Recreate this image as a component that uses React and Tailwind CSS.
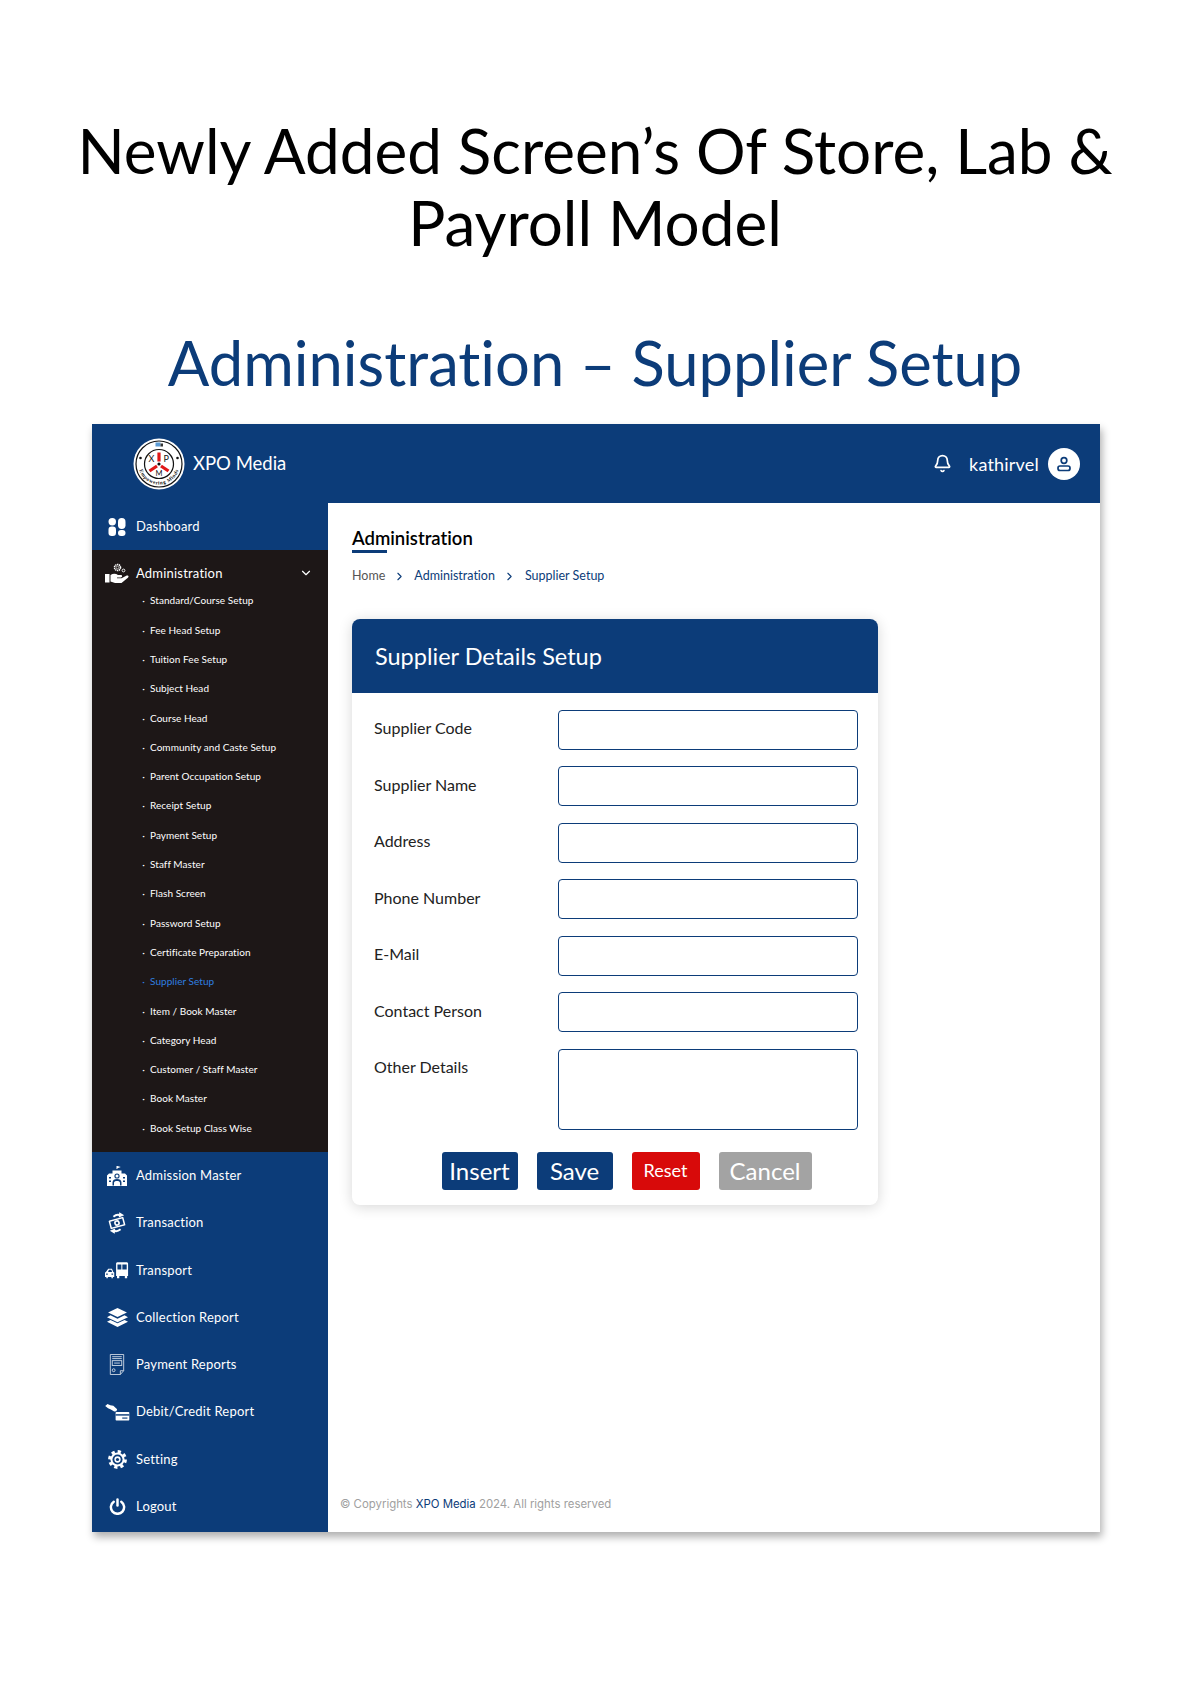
import React from 'react'
import { ChevronDown, ChevronRight, Bell } from 'lucide-react'

const subItems = [
  'Standard/Course Setup', 'Fee Head Setup', 'Tuition Fee Setup', 'Subject Head', 'Course Head',
  'Community and Caste Setup', 'Parent Occupation Setup', 'Receipt Setup', 'Payment Setup', 'Staff Master',
  'Flash Screen', 'Password Setup', 'Certificate Preparation', 'Supplier Setup', 'Item / Book Master',
  'Category Head', 'Customer / Staff Master', 'Book Master', 'Book Setup Class Wise',
]

const BLUE = '#0c3c79'

const Logo = () => (
  <svg viewBox="0 0 52 52" className="w-[52px] h-[52px]">
    <circle cx="26" cy="26" r="25.5" fill="#fff" />
    <circle cx="26" cy="26" r="23" fill="none" stroke="#111" strokeWidth="1.2" />
    <circle cx="26" cy="26" r="14.5" fill="none" stroke="#111" strokeWidth="1.2" />
    <path d="M26 14.500v9M16.500 33l7.500-5M35.500 33l-7.500-5" stroke="#e01818" strokeWidth="3.2" />
    <circle cx="26" cy="26" r="1.600" fill="#111" />
    <text x="15.500" y="23.500" fontSize="9" fill="#111">X</text>
    <text x="30.500" y="23.500" fontSize="9" fill="#111">P</text>
    <text x="22.500" y="37.500" fontSize="7.500" fill="#111">M</text>
    <rect x="22.500" y="4.500" width="5" height="4" fill="#5b9bd5" />
    <rect x="27.500" y="5.500" width="2.500" height="3" fill="#333" />
    <circle cx="7.500" cy="20" r="1.300" fill="#111" />
    <circle cx="44.500" cy="20" r="1.300" fill="#111" />
    <defs>
      <path id="logoRing" d="M5.500 26a20.500 20.500 0 0 0 41 0" />
    </defs>
    <text fontSize="5.200" fill="#111" fontFamily="Liberation Serif, serif" fontWeight="700" letterSpacing=".5">
      <textPath href="#logoRing" startOffset="50%" textAnchor="middle">Empowering Minds</textPath>
    </text>
  </svg>
)

const DashIcon = () => (
  <svg viewBox="0 0 18 18" className="w-[18px] h-[18px]" fill="#fff">
    <rect x="0.500" y="0" width="7.500" height="7.500" rx="3.700" />
    <rect x="10" y="0" width="7.500" height="11" rx="3.700" />
    <rect x="0.500" y="8.500" width="7.500" height="9.500" rx="3.200" />
    <rect x="10" y="12" width="7.500" height="6" rx="3" />
  </svg>
)

const HandIcon = () => (
  <svg viewBox="0 0 24 21" className="w-6 h-[21px]">
    <circle cx="12.500" cy="4.500" r="3" fill="none" stroke="#fff" strokeWidth="1.600" strokeDasharray="1.300 .6" />
    <circle cx="12.500" cy="4.500" r="1.300" fill="none" stroke="#fff" strokeWidth=".6" />
    <circle cx="18.500" cy="7.500" r="1.400" fill="none" stroke="#fff" strokeWidth=".9" />
    <rect x="0" y="11" width="4.500" height="8.500" fill="#fff" />
    <path d="M5.500 12c3-1.800 5.500-1.200 7.500 0h2.800c1.700 0 1.700 2.400 0 2.400H12v.8h4.500l5.200-2.600c1.500-.7 2.600 1 1.200 2.100L16.500 20H10l-4.500-1.500z" fill="#fff" />
  </svg>
)

const AdmissionIcon = () => (
  <svg viewBox="0 0 20 20" className="w-5 h-5" fill="#fff">
    <path d="M9.500 0h.9v3h-.9zM10.400 0l3.400 1-3.400 1.200z" />
    <path d="M5.500 7.500V4.500h9v3H18l2 2V20H0V9.500l2-2z" />
    <circle cx="10" cy="10" r="2.600" fill={BLUE} />
    <circle cx="10" cy="10" r="1.500" fill="#fff" />
    <path d="M5.500 19.500v-3c0-2.500 2-3.500 4.500-3.500s4.500 1 4.500 3.500v3h-1.500v-2.500c0-1.500-1.300-2-3-2s-3 .5-3 2v2.500z" fill={BLUE} />
    <path d="M2 11h2v1.600H2zM2 14.500h2v1.600H2zM16 11h2v1.600h-2zM16 14.500h2v1.600h-2z" fill={BLUE} />
  </svg>
)

const TransactionIcon = () => (
  <svg viewBox="0 0 20 24" className="w-[18px] h-[22px]">
    <path d="M6 5c2.500-2 6-2.500 8-1" fill="none" stroke="#fff" strokeWidth="2.200" />
    <path d="M12.500 0l5.500 3.500-6 2.500z" fill="#fff" />
    <g transform="rotate(-15 10 12)">
      <rect x="1.500" y="7" width="17" height="10" rx="1" fill="#fff" />
      <rect x="3.200" y="8.700" width="13.600" height="6.600" fill={BLUE} />
      <circle cx="10" cy="12" r="3.200" fill="#fff" />
      <circle cx="10" cy="12" r="1.400" fill={BLUE} />
    </g>
    <path d="M14 19c-2.500 2-6 2.500-8 1" fill="none" stroke="#fff" strokeWidth="2.200" />
    <path d="M7.500 24L2 20.500 8 18z" fill="#fff" />
  </svg>
)

const TransportIcon = () => (
  <svg viewBox="0 0 26 18" className="w-[24px] h-[17px]" fill="#fff">
    <path d="M3.500 7h4L9 10.500l1 .8V16H8.500v1.500H7V16H3v1.500H1.500V16H0v-4.700l1-.8z" />
    <path d="M4.200 8.200h2.600l.9 2.300H3.300z" fill={BLUE} />
    <rect x="1.200" y="12.300" width="1.800" height="1.300" fill={BLUE} />
    <rect x="7" y="12.300" width="1.800" height="1.300" fill={BLUE} />
    <path d="M12 1.500C12 .5 13 0 14 0h9c1 0 2 .5 2 1.500V15h-1v2.500h-2.500V15h-6v2.500H13V15h-1zM13.500 2.500V8h4.200V2.500zm5.300 0V8h4.700V2.500z" fillRule="evenodd" />
  </svg>
)

const LayersIcon = () => (
  <svg viewBox="0 0 20 18" className="w-[21px] h-[19px]" fill="#fff">
    <path d="M10 0l9 4.300-9 4.300-9-4.300z" />
    <path d="M3.300 6.900L10 10.100l6.700-3.200L20 8.700l-10 4.800L0 8.700z" />
    <path d="M3.300 11.300L10 14.500l6.700-3.200 3.300 1.800L10 18 0 13.100z" />
  </svg>
)

const ReportIcon = () => (
  <svg viewBox="0 0 16 22" className="w-[16px] h-[21px]" fill="none" stroke="#fff" strokeWidth=".9" opacity=".85">
    <path d="M1 .5h14v17l-3.500 4H1z" />
    <path d="M3 2.800h10M3 4.800h10" />
    <rect x="3" y="7" width="10" height="5" />
    <path d="M5 9.500h6" />
    <circle cx="4.500" cy="17" r="1.500" />
    <path d="M11.500 21.500v-4h3.500" />
  </svg>
)

const DebitIcon = () => (
  <svg viewBox="0 0 26 18" className="w-[25px] h-[17px]" fill="#fff">
    <path d="M0 2.200L2.400 0l3 1.200 3.200.6 4 3.700-.8 2.200-2.300.2-3.500-2.200-3-1.300z" />
    <rect x="11" y="8.500" width="14.500" height="9" rx=".8" />
    <rect x="11" y="10.800" width="14.500" height="1.500" fill={BLUE} />
    <rect x="18" y="14.300" width="5.500" height="1.200" fill={BLUE} />
  </svg>
)

const GearIcon = () => (
  <svg viewBox="0 0 20 20" className="w-[19px] h-[19px]">
    <circle cx="10" cy="10" r="8.300" fill="none" stroke="#fff" strokeWidth="3.200" strokeDasharray="3.400 3.110" />
    <circle cx="10" cy="10" r="7.400" fill="#fff" />
    <circle cx="10" cy="10" r="5.300" fill={BLUE} />
    <circle cx="10" cy="10" r="3.300" fill="#fff" />
    <circle cx="10" cy="10" r="1.700" fill={BLUE} />
  </svg>
)

const PowerIcon = () => (
  <svg viewBox="0 0 18 18" className="w-[17px] h-[17px]" fill="none" stroke="#fff" strokeWidth="2.600" strokeLinecap="round">
    <path d="M9 1.500v6.500" />
    <path d="M5 4a7 7 0 1 0 8 0" />
  </svg>
)

const navTop = [{ label: 'Dashboard', icon: <DashIcon /> }]
const navBottom = [
  { label: 'Admission Master', icon: <AdmissionIcon /> },
  { label: 'Transaction', icon: <TransactionIcon /> },
  { label: 'Transport', icon: <TransportIcon /> },
  { label: 'Collection Report', icon: <LayersIcon /> },
  { label: 'Payment Reports', icon: <ReportIcon /> },
  { label: 'Debit/Credit Report', icon: <DebitIcon /> },
  { label: 'Setting', icon: <GearIcon /> },
  { label: 'Logout', icon: <PowerIcon /> },
]

const NavRow = ({ label, icon }) => (
  <div className="h-[47.250px] flex items-center text-white text-[13px] tracking-[0.2px]">
    <div className="w-[44px] pl-[10px] pr-[4px] flex justify-center shrink-0">{icon}</div>
    <span>{label}</span>
  </div>
)

const fields = ['Supplier Code', 'Supplier Name', 'Address', 'Phone Number', 'E-Mail', 'Contact Person']

export default function App() {
  return (
    <div className="w-[1190px] h-[1684px] bg-white font-['Lato',sans-serif] [font-variant-ligatures:none] overflow-hidden">
      <div className="pt-[114px] text-center text-[62px] leading-[72px] text-black">
        Newly Added Screen’s Of Store, Lab &amp;<br />Payroll Model
      </div>
      <h1 className="mt-[68px] text-center text-[61.500px] leading-[72px] text-[#0c3c79]">Administration – Supplier Setup</h1>

      <div className="mt-[26px] ml-[92px] w-[1008px] h-[1108px] flex flex-col bg-white shadow-[2px_5px_8px_rgba(0,0,0,0.32)]">
        <header className="h-[79px] bg-[#0c3c79] flex items-center text-white shrink-0">
          <div className="ml-[41px]"><Logo /></div>
          <span className="ml-[8px] pt-[1px] text-[18.500px]">XPO Media</span>
          <div className="ml-auto flex items-center pr-[20px]">
            <Bell className="w-[19px] h-[19px]" strokeWidth={2.200} />
            <span className="ml-[17px] pt-[1px] text-[18px] tracking-[0.2px]">kathirvel</span>
            <div className="ml-[9px] w-8 h-8 rounded-full bg-white flex items-center justify-center">
              <svg viewBox="0 0 16 16" className="w-4 h-4" fill="none" stroke="#0c3c79" strokeWidth="1.700">
                <circle cx="8" cy="4.500" r="2.800" />
                <rect x="2" y="10" width="12" height="4.500" rx="2" />
              </svg>
            </div>
          </div>
        </header>

        <div className="flex flex-1 min-h-0">
          <aside className="w-[236px] bg-[#0c3c79] shrink-0 flex flex-col">
            {navTop.map((n) => <NavRow key={n.label} {...n} />)}
            <div className="bg-[#1d1717] h-[602px] text-white">
              <div className="h-[46px] flex items-center text-[13px] tracking-[0.2px] pr-[15px]">
                <div className="w-[44px] pl-[10px] pr-[4px] flex justify-center shrink-0"><HandIcon /></div>
                <span>Administration</span>
                <ChevronDown className="ml-auto w-[14px] h-[14px]" strokeWidth={2} />
              </div>
              <ul className="-mt-[10px]">
                {subItems.map((s) => (
                  <li
                    key={s}
                    className={`h-[29.300px] flex items-center text-[10px] tracking-[0.05px] ${s === 'Supplier Setup' ? 'text-[#2f7fe0]' : 'text-white'}`}
                  >
                    <span className="w-[58px] text-right pr-[5px]">·</span>
                    <span>{s}</span>
                  </li>
                ))}
              </ul>
            </div>
            {navBottom.map((n) => <NavRow key={n.label} {...n} />)}
          </aside>

          <main className="flex-1 flex flex-col pl-[24px] relative">
            <h2 className="mt-[24px] text-[18.500px] leading-[22px] text-black font-semibold">Administration</h2>
            <div className="mt-[1px] w-[35px] h-[3px] bg-[#0c3c79]" />
            <nav className="mt-[13px] flex items-center text-[12.500px] leading-[20px] text-[#0c3c79]">
              <span className="text-[#555]">Home</span>
              <ChevronRight className="mx-[8px] w-[13px] h-[13px]" />
              <span>Administration</span>
              <ChevronRight className="mx-[8.500px] w-[13px] h-[13px]" />
              <span>Supplier Setup</span>
            </nav>

            <section className="mt-[33px] w-[526px] h-[586px] bg-white rounded-[8px] shadow-[0_2px_14px_rgba(0,0,0,0.16)] flex flex-col">
              <div className="h-[74px] bg-[#0c3c79] rounded-t-[8px] flex items-center pl-[23px] pt-[2px] text-white text-[23.500px]">
                Supplier Details Setup
              </div>
              <div className="pt-[16.500px] pl-[22px] flex flex-col gap-[16.500px]">
                {fields.map((f) => (
                  <div key={f} className="flex items-center h-[40px]">
                    <label className="w-[184px] pb-[3px] text-[16px] text-[#222]">{f}</label>
                    <input className="w-[299.500px] h-[40px] border-[1.500px] border-[#0c3c79] rounded-[4px] bg-white" />
                  </div>
                ))}
                <div className="flex">
                  <label className="w-[184px] pt-[6px] text-[16px] text-[#222]">Other Details</label>
                  <textarea className="w-[299.500px] h-[81px] border-[1.500px] border-[#0c3c79] rounded-[4px] bg-white resize-none" />
                </div>
              </div>
              <div className="mt-[22px] ml-[89.500px] flex gap-[19px] text-white">
                <button className="w-[76px] h-[38px] bg-[#0c3c79] rounded-[3px] text-[24px]">Insert</button>
                <button className="w-[76px] h-[38px] bg-[#0c3c79] rounded-[3px] text-[24px]">Save</button>
                <button className="w-[68px] h-[38px] bg-[#d80a0a] rounded-[3px] text-[18px]">Reset</button>
                <button className="w-[93px] h-[38px] bg-[#a3a3a3] rounded-[3px] text-[24px]">Cancel</button>
              </div>
            </section>

            <footer className="absolute left-[12px] bottom-[18px] text-[11.400px] leading-[20px] text-[#a0a0a0] font-['Inter',sans-serif]">
              © Copyrights <span className="text-[#0c3c79]">XPO Media</span> 2024. All rights reserved
            </footer>
          </main>
        </div>
      </div>
    </div>
  )
}
